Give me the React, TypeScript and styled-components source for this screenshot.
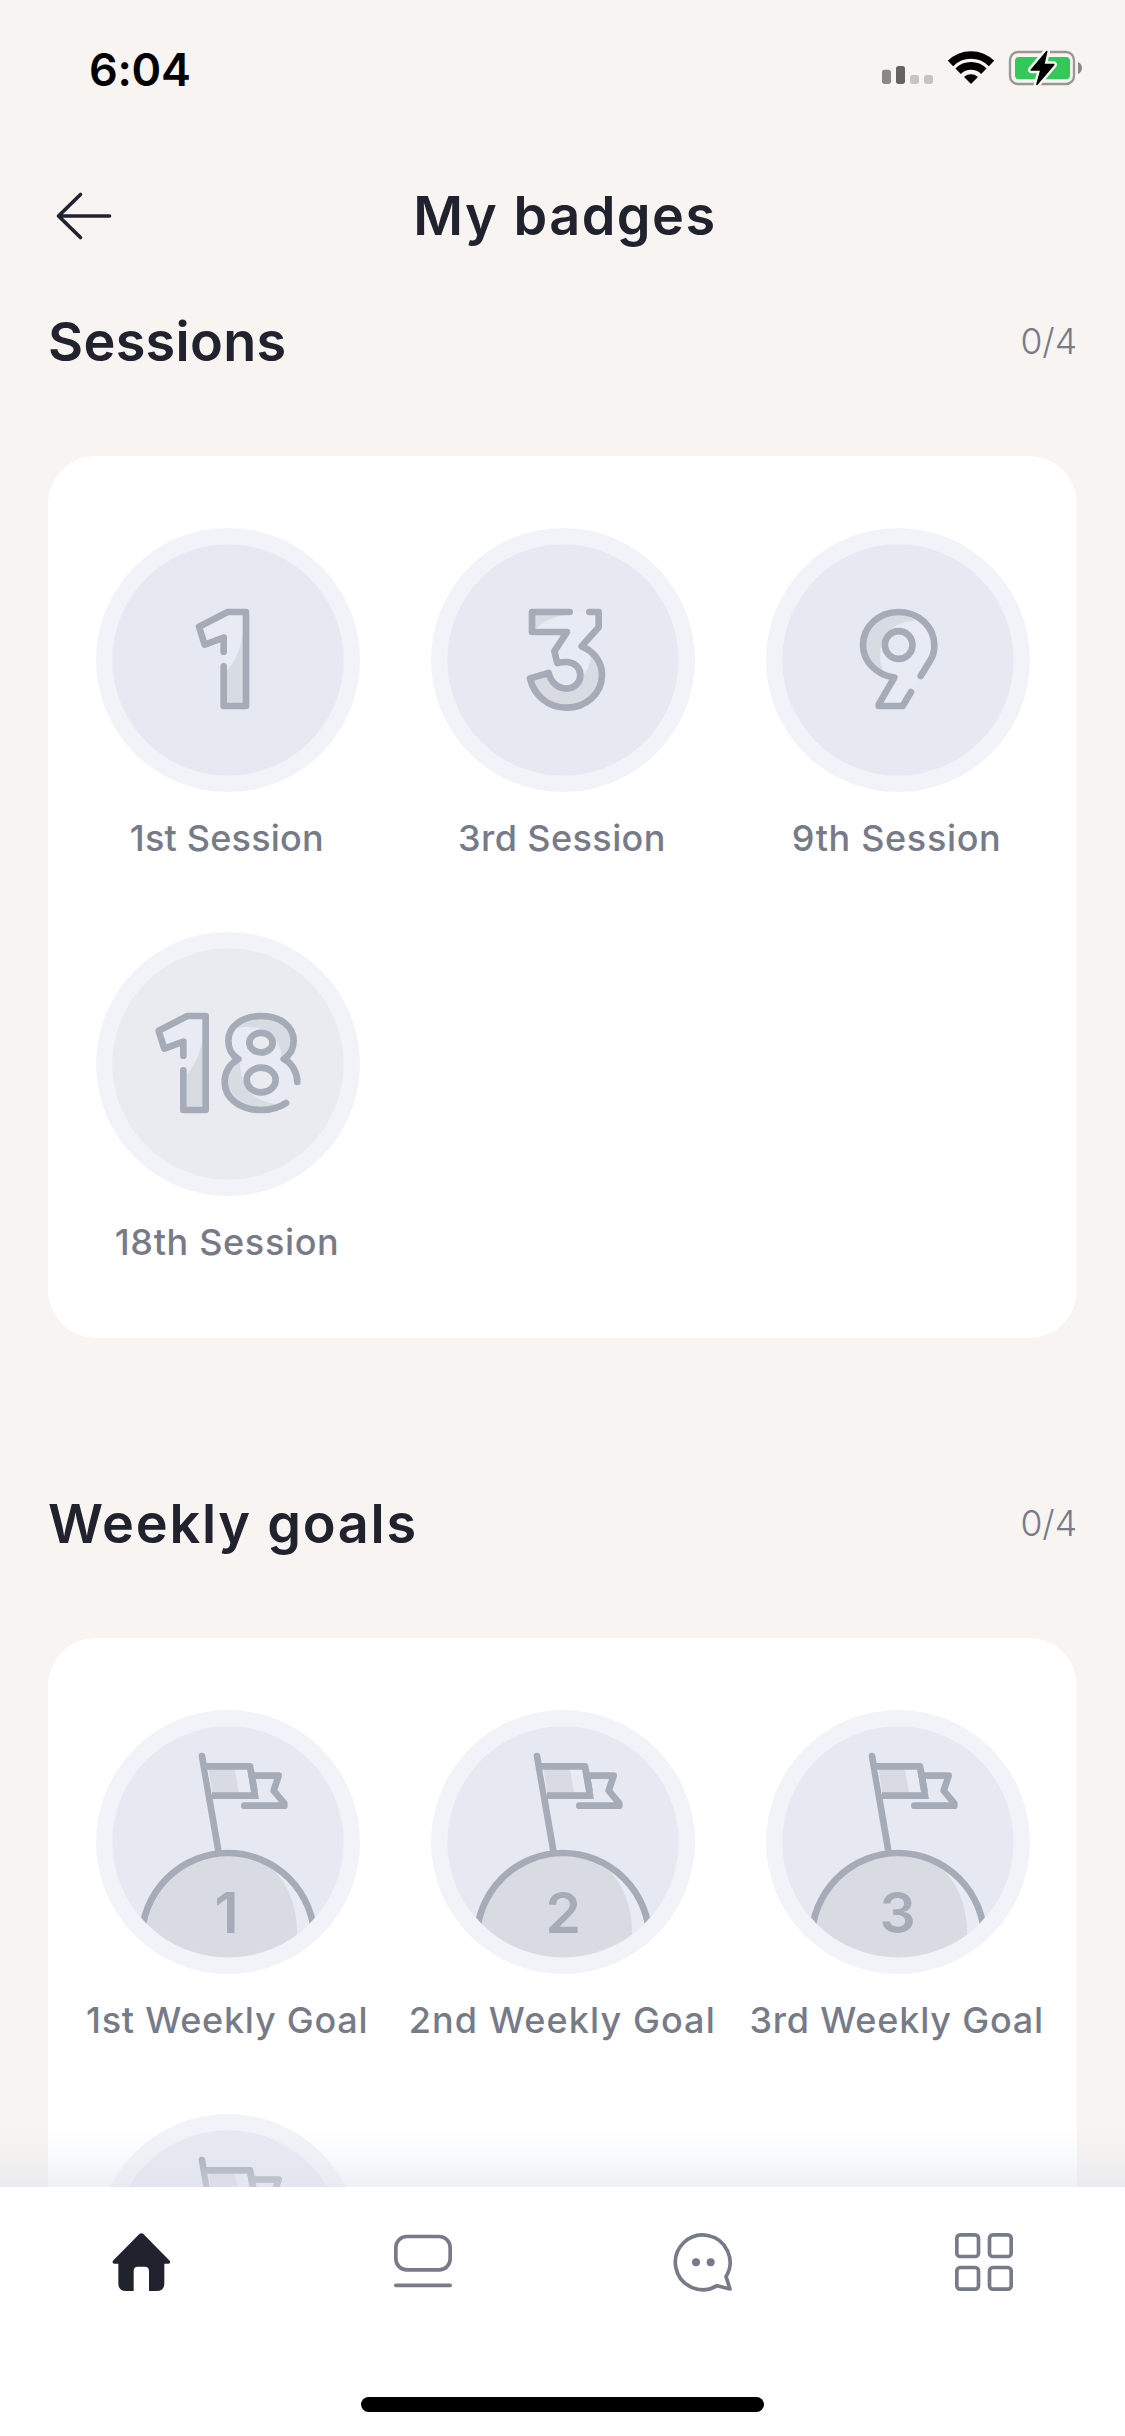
import React, { useId } from "react";
import type { ReactNode } from "react";
import styled, { createGlobalStyle } from "styled-components";

const color = {
  page: "#f7f4f1",
  card: "#ffffff",
  ink: "#20222e",
  muted: "#767b87",
  ring: "#f2f3f8",
  disc: "#e6e9f2",
  discPale: "#eaebf1",
  line: "#a5abb7",
  shade: "#d8dbe2",
  light: "#e8ebf3",
};

const GlobalStyle = createGlobalStyle`
  *, *::before, *::after { box-sizing: border-box; }
  body {
    margin: 0;
    background: ${color.page};
    font-family: Inter, "Liberation Sans", sans-serif;
    -webkit-font-smoothing: antialiased;
  }
`;

/* ---------- layout ---------- */

const Screen = styled.main`
  display: flex;
  flex-direction: column;
  width: 1125px;
  height: 2436px;
  overflow: hidden;
  background: ${color.page};
  color: ${color.ink};
`;

const StatusBar = styled.div`
  flex: none;
  display: flex;
  align-items: center;
  justify-content: space-between;
  height: 138px;
  padding: 0 43px 0 89px;
`;

const Clock = styled.span`
  font-size: 45px;
  font-weight: 600;
  letter-spacing: -0.3px;
  color: #000;
`;

const StatusIcons = styled.svg`
  display: block;
  width: 200px;
  height: 40px;
`;

const Header = styled.header`
  flex: none;
  display: grid;
  grid-template-columns: 60px 1fr 60px;
  align-items: center;
  height: 156px;
  padding: 0 54px;
`;

const BackButton = styled.button`
  display: flex;
  padding: 0;
  border: 0;
  background: none;
  color: ${color.ink};

  svg {
    width: 60px;
    height: 60px;
  }
`;

const Title = styled.h1`
  margin: 0;
  padding-left: 5px;
  text-align: center;
  font-size: 54px;
  line-height: 64px;
  font-weight: 600;
  letter-spacing: 1.5px;
`;

const Content = styled.div`
  flex: 1;
  min-height: 0;
  display: flex;
  flex-direction: column;
  gap: 138px;
  padding: 0 48px;
  overflow: hidden;
`;

const Section = styled.section`
  flex: none;
  display: flex;
  flex-direction: column;
  gap: 66px;
`;

const SectionHead = styled.div`
  display: flex;
  align-items: center;
  justify-content: space-between;
  height: 96px;
`;

const SectionTitle = styled.h2<{ $tracking: number }>`
  margin: 0;
  font-size: 54px;
  line-height: 64px;
  font-weight: 600;
  letter-spacing: ${(p) => p.$tracking}px;
`;

const Progress = styled.span`
  font-size: 35.5px;
  line-height: 48px;
  font-weight: 300;
  color: ${color.muted};
`;

const BadgeCard = styled.div`
  display: grid;
  grid-template-columns: 336px 334px 335px;
  row-gap: 70px;
  padding: 72px 12px;
  border-radius: 48px;
  background: ${color.card};
`;

const BadgeItem = styled.div`
  display: flex;
  flex-direction: column;
  align-items: center;
  gap: 22px;
`;

const BadgeArt = styled.svg`
  display: block;
  width: 264px;
  height: 264px;
`;

const BadgeLabel = styled.span<{ $tracking: number }>`
  font-size: 36px;
  line-height: 48px;
  font-weight: 500;
  white-space: nowrap;
  letter-spacing: ${(p) => p.$tracking}px;
  margin-right: ${(p) => 2.5 - p.$tracking}px;
  color: ${color.muted};
`;

const TabBar = styled.nav`
  position: relative;
  flex: none;
  display: flex;
  flex-direction: column;
  align-items: center;
  justify-content: space-between;
  height: 249px;
  padding: 46px 0 24px;
  background: #fff;

  &::before {
    content: "";
    position: absolute;
    left: 0;
    right: 0;
    bottom: 100%;
    height: 60px;
    background: linear-gradient(rgba(223, 226, 236, 0), rgba(223, 226, 236, 0.15) 45%, rgba(223, 226, 236, 0.5));
  }
`;

const Tabs = styled.div`
  display: grid;
  grid-template-columns: repeat(4, 1fr);
  justify-items: center;
  width: 100%;
`;

const Tab = styled.button<{ $active?: boolean }>`
  display: flex;
  padding: 0;
  border: 0;
  background: none;
  color: ${(p) => (p.$active ? color.ink : color.muted)};

  svg {
    width: 58px;
    height: 58px;
    overflow: visible;
  }
`;

const HomeIndicator = styled.div`
  width: 403px;
  height: 15px;
  border-radius: 8px;
  background: #000;
`;

/* ---------- badge drawings ---------- */

function Badge({ disc = color.disc, children }: { disc?: string; children: ReactNode }) {
  return (
    <BadgeArt
      viewBox="0 0 792 792"
      fill="none"
      stroke={color.line}
      strokeWidth={20}
      strokeLinecap="round"
      strokeLinejoin="round"
    >
      <circle cx={396} cy={396} r={396} fill={color.ring} stroke="none" />
      <circle cx={396} cy={396} r={347} fill={disc} stroke="none" />
      {children}
    </BadgeArt>
  );
}

function OutlinedOne() {
  return (
    <g transform="translate(-48 -54)">
      <path d="M443 306H498V588H431V383L374 404L357 350Z" fill={color.light} stroke="none" />
      <path d="M490 366Q480 440 441 482V580H490Z" fill={color.shade} stroke="none" />
      <path d="M431 425V383L374 404L357 350L443 306H498V588H431V469" />
    </g>
  );
}

const FirstSession = () => (
  <Badge>
    <OutlinedOne />
  </Badge>
);

const ThirdSession = () => (
  <Badge>
    <g transform="translate(-64 -54)">
      <path
        d="M480 306H367V366H472L434 424L443 459Q456 456 470 456C494 456 512 473 512 495C512 518 494 536 470 536C445 536 424 517 417 489L361 505C372 555 415 593 470 593C530 593 577 550 577 495C577 455 552 424 516 409L567 352V306Z"
        fill={color.light}
        stroke="none"
      />
      <path d="M376 315H462Q410 325 376 358Z" fill={color.shade} stroke="none" />
      <path
        d="M543 432C562 450 568 475 568 495C568 545 525 585 470 585C420 585 382 550 369 508L414 496C422 528 445 540 470 540C500 540 516 520 516 497Q545 475 543 432Z"
        fill={color.shade}
        stroke="none"
      />
      <path d="M480 306H367V366H472L434 424L443 459Q456 456 470 456C494 456 512 473 512 495C512 518 494 536 470 536C445 536 424 517 417 489L361 505C372 555 415 593 470 593C530 593 577 550 577 495C577 455 552 424 516 409L567 352V306H539" />
    </g>
  </Badge>
);

const NinthSession = () => (
  <Badge>
    <g transform="translate(-47 -54)">
      <path
        d="M511 498L541 449C549 436 552 421 552 407C552 350 505 306 445 306C385 306 338 350 338 404C338 455 379 495 432 503L385 582V588H457L482 546Z"
        fill={color.light}
        stroke="none"
      />
      <path
        d="M495 333Q470 312 445 312C390 312 344 355 344 404C344 435 367 468 399 482C388 460 390 440 390 420C395 370 440 330 495 333Z"
        fill={color.shade}
        stroke="none"
      />
      <circle cx={445} cy={405} r={41.5} fill={color.disc} />
      <path d="M511 498L541 449C549 436 552 421 552 407C552 350 505 306 445 306C385 306 338 350 338 404C338 455 379 495 432 503L385 583V588H457L482 546" />
    </g>
  </Badge>
);

const EighteenthSession = () => (
  <Badge disc={color.discPale}>
    <g transform="translate(-121 0)">
      <OutlinedOne />
    </g>
    <g transform="translate(-48 -36)">
      <path
        d="M618 549C598 563 572 570 543 570C480 570 434 535 434 486C434 458 448 433 475 417C455 405 445 385 445 362C445 318 488 288 543 288C600 288 641 318 641 362C641 385 630 405 611 417C638 430 652 460 652 486Z"
        fill={color.light}
        stroke="none"
      />
      <path
        d="M466 323C485 304 510 294 543 294C595 294 635 325 635 362C635 380 622 399 604 408Q604 385 586 360Q566 320 500 321Z"
        fill={color.shade}
        stroke="none"
      />
      <path
        d="M480 423C455 440 440 460 440 486C440 532 485 564 543 564Q568 562 590 553Q505 540 488 480Q480 455 480 423Z"
        fill={color.shade}
        stroke="none"
      />
      <ellipse cx={543} cy={368} rx={35} ry={29.5} fill={color.discPale} />
      <ellipse cx={543.5} cy={480} rx={43.5} ry={37} fill={color.discPale} />
      <path d="M618 549C598 563 572 570 543 570C480 570 434 535 434 486C434 458 448 433 475 417C455 405 445 385 445 362C445 318 488 288 543 288C600 288 641 318 641 362C641 385 630 405 611 417C638 430 652 460 652 486" />
    </g>
  </Badge>
);

function WeeklyGoal({ count, x }: { count?: number; x?: number }) {
  const clip = useId();
  return (
    <Badge>
      <clipPath id={clip}>
        <circle cx={396} cy={396} r={346} />
      </clipPath>
      <g clipPath={`url(#${clip})`}>
        <g transform="translate(-78 -30)">
          <path d="M396 168L446 458" />
          <path d="M410 199H540L556 287H426Z" fill={color.light} stroke="none" />
          <path d="M415 205H494L508 282H428Z" fill={color.shade} stroke="none" />
          <path d="M410 199H540L553 270" />
          <path d="M542 210L555 287H426" strokeLinejoin="miter" strokeLinecap="butt" />
          <path d="M553 227H626L611 272L643 310V317H523" />
          <circle cx={474} cy={718} r={259} fill={color.light} stroke="none" />
          <path
            d="M215 718A259 259 0 0 1 560 474C640 515 681 600 681 700V800H215Z"
            fill={color.shade}
            stroke="none"
          />
          <circle cx={474} cy={718} r={259} />
        </g>
        {count !== undefined && (
          <text
            x={x}
            y={668}
            textAnchor="middle"
            fontFamily="Inter, sans-serif"
            fontSize={171}
            fontWeight={600}
            fill={color.line}
            stroke="none"
          >
            {count}
          </text>
        )}
      </g>
    </Badge>
  );
}

/* ---------- interface icons ---------- */

const StatusGlyphs = () => (
  <StatusIcons viewBox="66 60 600 120" fill="none">
    <rect x={66} y={122} width={27} height={43} rx={8} fill="#8b8987" />
    <rect x={108} y={111} width={27} height={54} rx={8} fill="#656361" />
    <rect x={150} y={138} width={27} height={27} rx={8} fill="#c6c3c1" />
    <rect x={192} y={138} width={27} height={27} rx={8} fill="#c6c3c1" />
    <g stroke="#000" strokeWidth={23}>
      <path d="M271.5 103.5A87 87 0 0 1 394.5 103.5" />
      <path d="M294.5 126.5A54.5 54.5 0 0 1 371.5 126.5" />
      <path d="M333 162L315 144A28 28 0 0 1 351 144Z" fill="#000" strokeWidth={4} strokeLinejoin="round" />
    </g>
    <rect x={450} y={69} width={192} height={96} rx={24} stroke="#9a9694" strokeWidth={7} />
    <rect x={465} y={84} width={165} height={67} rx={12} fill="#34c759" />
    <path d="M654 99C670 105 670 129 654 135Z" fill="#8b8987" />
    <path
      d="M560 68L514 123H543L531 166L581 107H551Z"
      fill="#000"
      stroke={color.page}
      strokeWidth={20}
      strokeLinejoin="round"
    />
    <path d="M560 68L514 123H543L531 166L581 107H551Z" fill="#000" stroke="#000" strokeWidth={5} strokeLinejoin="round" />
  </StatusIcons>
);

const ArrowLeft = () => (
  <svg viewBox="54 186 60 60" fill="none" stroke="currentColor" strokeWidth={3.6} strokeLinecap="round" strokeLinejoin="round">
    <path d="M80.5 194.500L58.500 216L80.500 237.500M59 216H109.500" />
  </svg>
);

const HomeIcon = () => (
  <svg viewBox="-2 0 174 174" fill="currentColor">
    <path d="M80 3Q86 -2 92 3L171 83Q176 91 167 92H155V151Q155 174 132 174H109V114Q109 101 96 101H76Q63 101 63 114V174H40Q17 174 17 151V92H5Q-3 91 1 83Z" />
  </svg>
);

const FeedIcon = () => (
  <svg viewBox="-3 0 174 174" fill="none" stroke="currentColor" strokeWidth={11} strokeLinecap="round">
    <rect x={5.5} y={10.5} width={163} height={100} rx={33} />
    <path d="M5.500 157H168.500" />
  </svg>
);

const ChatIcon = () => (
  <svg viewBox="0 0 174 174" fill="none" stroke="currentColor" strokeWidth={11} strokeLinejoin="round">
    <path d="M129 158A82 82 0 1 1 156 131L168 168Z" />
    <circle cx={66} cy={88} r={12} fill="currentColor" stroke="none" />
    <circle cx={110} cy={88} r={12} fill="currentColor" stroke="none" />
  </svg>
);

const GridIcon = () => (
  <svg viewBox="0 0 174 174" fill="none" stroke="currentColor" strokeWidth={11}>
    <rect x={5.5} y={5.5} width={65} height={65} rx={10} />
    <rect x={103.5} y={5.5} width={65} height={65} rx={10} />
    <rect x={5.5} y={103.5} width={65} height={65} rx={10} />
    <rect x={103.5} y={103.5} width={65} height={65} rx={10} />
  </svg>
);

/* ---------- data ---------- */

type BadgeEntry = { id: string; label?: string; tracking?: number; art: ReactNode };

const sections: { title: string; tracking: number; progress: string; badges: BadgeEntry[] }[] = [
  {
    title: "Sessions",
    tracking: 0.3,
    progress: "0/4",
    badges: [
      { id: "s1", label: "1st Session", tracking: 0.2, art: <FirstSession /> },
      { id: "s3", label: "3rd Session", tracking: 0.4, art: <ThirdSession /> },
      { id: "s9", label: "9th Session", tracking: 0.65, art: <NinthSession /> },
      { id: "s18", label: "18th Session", tracking: 0.65, art: <EighteenthSession /> },
    ],
  },
  {
    title: "Weekly goals",
    tracking: 1.75,
    progress: "0/4",
    badges: [
      { id: "w1", label: "1st Weekly Goal", tracking: 0.75, art: <WeeklyGoal count={1} x={392} /> },
      { id: "w2", label: "2nd Weekly Goal", tracking: 1.1, art: <WeeklyGoal count={2} x={397} /> },
      { id: "w3", label: "3rd Weekly Goal", tracking: 0.8, art: <WeeklyGoal count={3} x={395} /> },
      { id: "w4", art: <WeeklyGoal /> },
    ],
  },
];

export default function App() {
  return (
    <>
      <GlobalStyle />
      <Screen>
        <StatusBar>
          <Clock>6:04</Clock>
          <StatusGlyphs />
        </StatusBar>
        <Header>
          <BackButton aria-label="Back">
            <ArrowLeft />
          </BackButton>
          <Title>My badges</Title>
        </Header>
        <Content>
          {sections.map((section) => (
            <Section key={section.title}>
              <SectionHead>
                <SectionTitle $tracking={section.tracking}>{section.title}</SectionTitle>
                <Progress>{section.progress}</Progress>
              </SectionHead>
              <BadgeCard>
                {section.badges.map((badge) => (
                  <BadgeItem key={badge.id}>
                    {badge.art}
                    {badge.label && <BadgeLabel $tracking={badge.tracking ?? 0}>{badge.label}</BadgeLabel>}
                  </BadgeItem>
                ))}
              </BadgeCard>
            </Section>
          ))}
        </Content>
        <TabBar>
          <Tabs>
            <Tab $active aria-label="Home">
              <HomeIcon />
            </Tab>
            <Tab aria-label="Feed">
              <FeedIcon />
            </Tab>
            <Tab aria-label="Chat">
              <ChatIcon />
            </Tab>
            <Tab aria-label="More">
              <GridIcon />
            </Tab>
          </Tabs>
          <HomeIndicator />
        </TabBar>
      </Screen>
    </>
  );
}
